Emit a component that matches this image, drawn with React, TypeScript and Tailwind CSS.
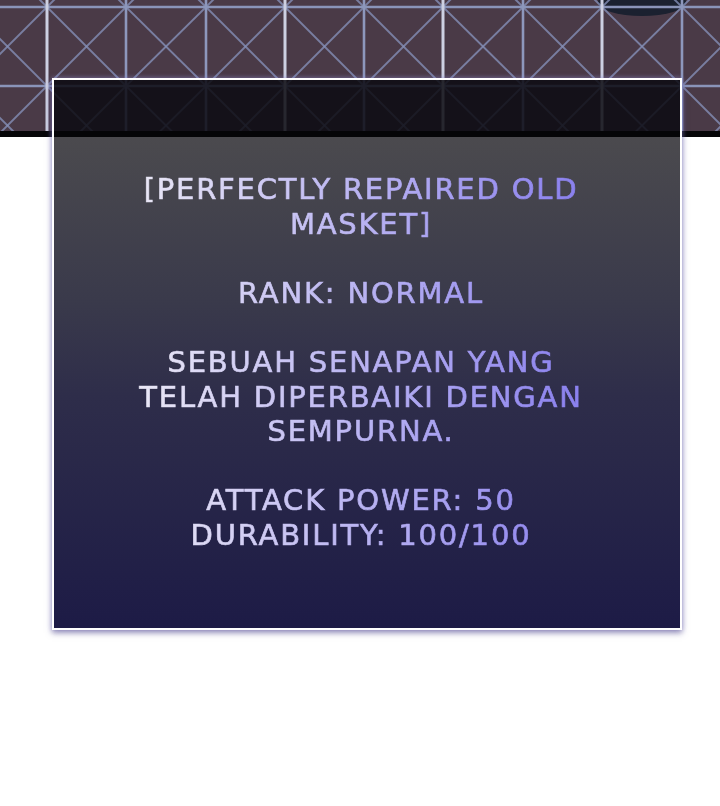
import React from 'react';

// vertical girders of the steel frame, x positions
const columns = [-32, 47, 126, 206, 285, 364, 443, 523, 602, 682, 761];
const brightColumns = [47, 285, 443, 602];
const rows = [-72, 7, 86, 165];

const itemLines = [
    ['[PERFECTLY REPAIRED OLD', 'MASKET]'],
    ['RANK: NORMAL'],
    ['SEBUAH SENAPAN YANG', 'TELAH DIPERBAIKI DENGAN', 'SEMPURNA.'],
    ['ATTACK POWER: 50', 'DURABILITY: 100/100'],
];

const FrameBackdrop: React.FC = () => {
    const diagonals: { x1: number; y1: number; x2: number; y2: number }[] = [];
    for (let c = 0; c < columns.length - 1; c++) {
        for (let r = 0; r < rows.length - 1; r++) {
            diagonals.push({ x1: columns[c], y1: rows[r], x2: columns[c + 1], y2: rows[r + 1] });
            diagonals.push({ x1: columns[c + 1], y1: rows[r], x2: columns[c], y2: rows[r + 1] });
        }
    }

    return (
        <svg width="720" height="131" viewBox="0 0 720 131" className="block">
            <rect width="720" height="131" fill="#4a3a47" />
            <ellipse cx="642" cy="2" rx="44" ry="14" fill="#1b2130" />
            <g className="blur-[0.6px]">
                {diagonals.map((d, i) => (
                    <line key={i} {...d} stroke="#8590b8" strokeWidth="1.8" opacity="0.8" />
                ))}
                {rows.map((y) => (
                    <line key={y} x1="0" y1={y} x2="720" y2={y} stroke="#8a94b9" strokeWidth="2.6" />
                ))}
                {columns.map((x) => (
                    <line
                        key={x}
                        x1={x}
                        y1="0"
                        x2={x}
                        y2="131"
                        stroke={brightColumns.includes(x) ? '#cdd0e2' : '#8d97bc'}
                        strokeWidth={brightColumns.includes(x) ? 3 : 2.6}
                    />
                ))}
            </g>
        </svg>
    );
};

const App: React.FC = () => {
    return (
        <div className="w-[720px] h-[806px] bg-white overflow-hidden">
            <div className="flex flex-col">
                <FrameBackdrop />
                <div className="h-[6px] bg-[#060608]" />
            </div>

            <div className="relative -mt-[59px] ml-[52px] w-[630px] h-[552px] border-2 border-white flex flex-col shadow-[0_3px_6px_rgba(70,62,130,0.55),0_0_5px_rgba(170,160,235,0.55)]">
                <div className="h-[51px] bg-[#0c0b12]/[0.86]" />
                <div className="h-[6px] bg-[#050507]" />
                <div className="flex-1 bg-[linear-gradient(180deg,#4b4a4e_0%,#3a3a4b_33%,#2e2d4a_53%,#1d1b46_100%)]">
                    <div
                        className="pt-[35px] pr-[12px] text-center text-[29px] leading-[34.6px] tracking-[1.8px] bg-[linear-gradient(90deg,#eceaf6_12%,#8a80ee_84%)] bg-clip-text text-transparent [-webkit-text-stroke:0.7px_transparent]"
                        style={{ fontFamily: '"DejaVu Sans", sans-serif' }}
                    >
                        {itemLines.map((block, i) => (
                            <div key={i} className={i > 0 ? 'mt-[34.6px]' : ''}>
                                {block.map((line) => (
                                    <div key={line}>{line}</div>
                                ))}
                            </div>
                        ))}
                    </div>
                </div>
            </div>
        </div>
    );
};

export default App;
